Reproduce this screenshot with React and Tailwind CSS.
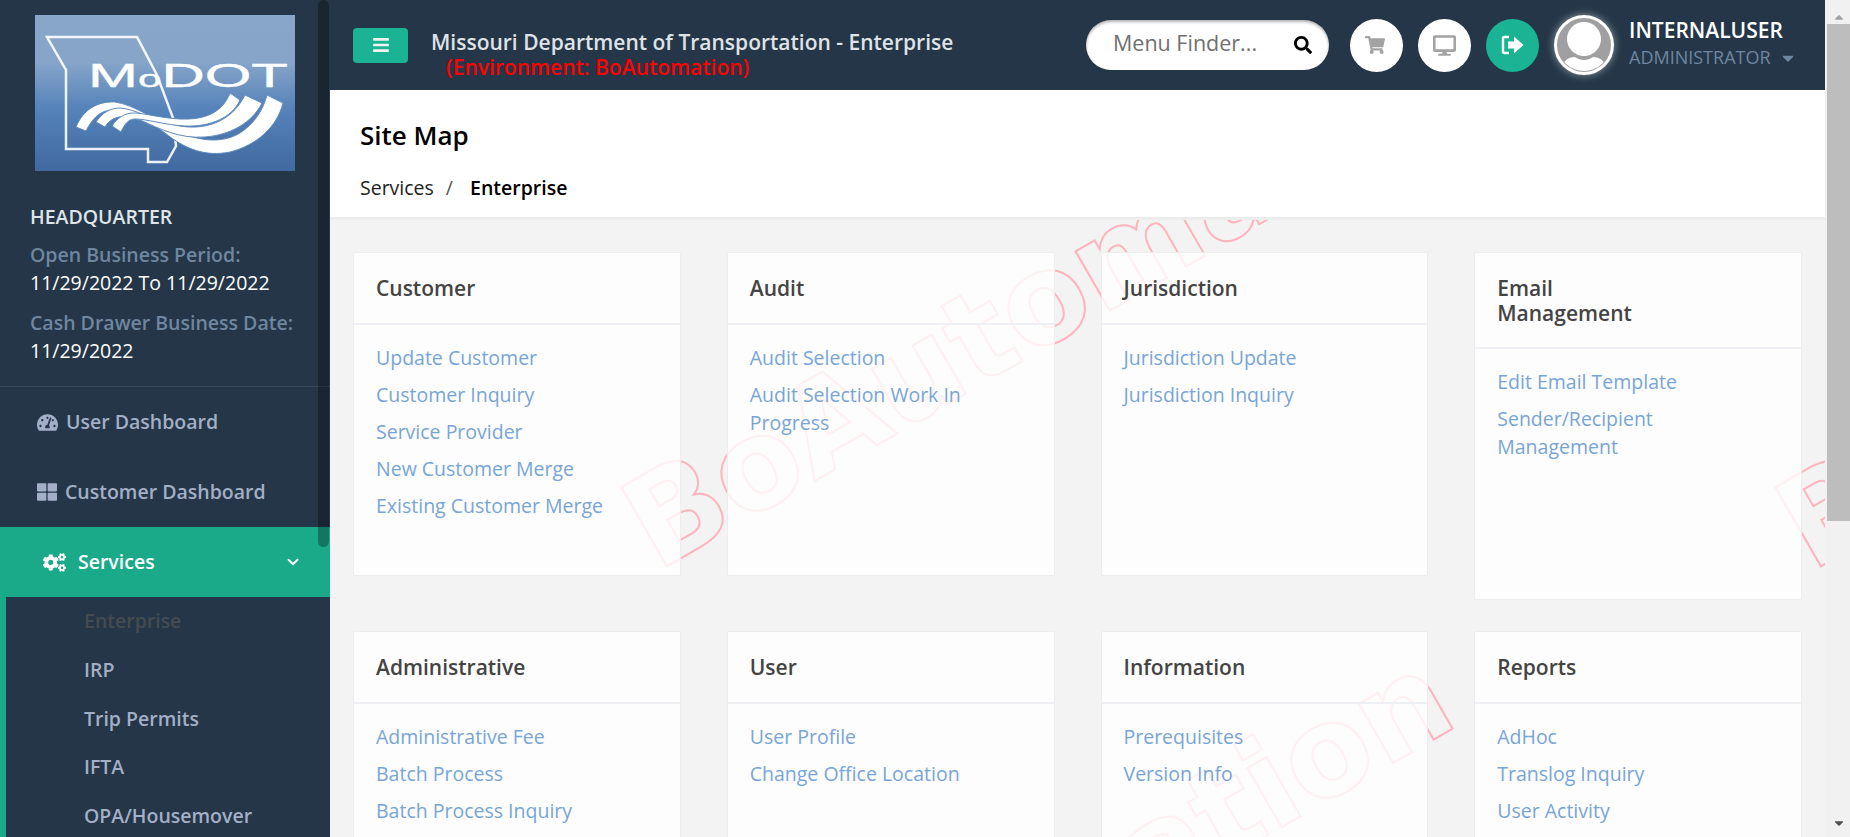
import { FaTachometerAlt, FaThLarge, FaCogs, FaShoppingCart, FaDesktop, FaSearch, FaBars, FaCaretDown, FaCaretUp } from 'react-icons/fa'
import { ChevronDown } from 'lucide-react'

const sections = [
    { title: 'Customer', links: ['Update Customer', 'Customer Inquiry', 'Service Provider', 'New Customer Merge', 'Existing Customer Merge'] },
    { title: 'Audit', links: ['Audit Selection', 'Audit Selection Work In Progress'] },
    { title: 'Jurisdiction', links: ['Jurisdiction Update', 'Jurisdiction Inquiry'] },
    { title: 'Email Management', links: ['Edit Email Template', 'Sender/Recipient Management'], narrow: true },
    { title: 'Administrative', links: ['Administrative Fee', 'Batch Process', 'Batch Process Inquiry'] },
    { title: 'User', links: ['User Profile', 'Change Office Location'] },
    { title: 'Information', links: ['Prerequisites', 'Version Info'] },
    { title: 'Reports', links: ['AdHoc', 'Translog Inquiry', 'User Activity'] },
]

const subMenu = ['Enterprise', 'IRP', 'Trip Permits', 'IFTA', 'OPA/Housemover']

function Logo() {
    return (
        <svg viewBox="0 0 260 156" className="block w-[260px] h-[156px]">
            <defs>
                <linearGradient id="logoBg" x1="0" y1="0" x2="0" y2="1">
                    <stop offset="0" stopColor="#88a6c8" />
                    <stop offset="0.3" stopColor="#86a5c9" />
                    <stop offset="0.6" stopColor="#5583ba" />
                    <stop offset="1" stopColor="#40699f" />
                </linearGradient>
            </defs>
            <rect width="260" height="156" fill="url(#logoBg)" />
            <path d="M12 22 L102 22 L122 60 L138 103 L141 131 L132 147 L113 147 L113 134 L31 134 L31 55 Z" fill="none" stroke="#fff" strokeWidth="2.5" opacity="0.9" />
            <text x="53" y="72" fontFamily="Liberation Sans, sans-serif" fontSize="34" fill="#fff" stroke="#fff" strokeWidth="0.4" textLength="200" lengthAdjust="spacingAndGlyphs">
                M<tspan fontSize="24">o</tspan>DOT
            </text>
            <g fill="#fff" stroke="#5f8cc0" strokeWidth="1">
                <path d="M41 112 C48 95 62 86 80 87 C100 90 118 104 140 115 C160 125 185 130 205 118 C220 108 228 95 232 80 L248 88 C242 112 222 130 195 137 C170 142 150 134 130 118 C112 105 95 96 78 95 C65 95 57 104 51 116 Z" />
                <path d="M61 107 C67 98 75 93 85 93 C100 94 118 105 140 110 C165 116 195 110 210 80 L227 88 C217 108 195 120 170 122 C145 124 125 114 105 105 C92 100 78 99 70 112 Z" />
                <path d="M77 111 C82 103 90 98 98 98 C110 98 125 103 145 104 C170 105 187 98 195 78 L205 85 C197 103 175 112 150 111 C130 110 112 104 100 104 C94 104 90 108 86 117 Z" />
            </g>
        </svg>
    )
}

function Sidebar() {
    return (
        <aside className="relative w-[330px] shrink-0 h-full overflow-hidden bg-[#243647]">
            <div className="pt-[15px] pl-[35px]">
                <Logo />
            </div>
            <div className="pl-[30px] pt-[32px] pb-[21px] border-b border-white/10 text-[19.5px] leading-[28px]">
                <div className="font-semibold text-[#dfe4e8]">HEADQUARTER</div>
                <div className="mt-[10px] font-semibold text-[#6f86a0]">Open Business Period:</div>
                <div className="text-white">11/29/2022 To 11/29/2022</div>
                <div className="mt-[12px] font-semibold text-[#6f86a0]">Cash Drawer Business Date:</div>
                <div className="text-white">11/29/2022</div>
            </div>
            <nav className="text-[19.5px] font-semibold text-[#a3afc6]">
                <a className="flex items-center h-[70px] pl-[37px] gap-[8px]">
                    <FaTachometerAlt className="w-[21px] h-[21px]" />
                    <span>User Dashboard</span>
                </a>
                <a className="flex items-center h-[70px] pl-[37px] gap-[8px]">
                    <FaThLarge className="w-[20px] h-[20px]" />
                    <span>Customer Dashboard</span>
                </a>
                <a className="flex items-center h-[70px] pl-[43px] gap-[12px] bg-[#1aaa8a] text-white">
                    <FaCogs className="w-[23px] h-[23px]" />
                    <span>Services</span>
                    <ChevronDown className="ml-auto mr-[28px] w-[18px] h-[18px]" strokeWidth={2.5} />
                </a>
                <ul className="border-l-[6px] border-[#1aaa8a]">
                    {subMenu.map((item, i) => (
                        <li key={item} className={`h-[48.8px] leading-[48px] pl-[78px] ${i === 0 ? 'text-[#454b51]' : ''}`}>
                            {item}
                        </li>
                    ))}
                </ul>
            </nav>
            <div className="absolute top-0 right-[1px] w-[11px] h-[547px] rounded-full bg-black/30" />
        </aside>
    )
}

function Avatar() {
    return (
        <div className="w-[60px] h-[60px] rounded-full shadow-[0_0_8px_rgba(255,255,255,0.5)]">
            <svg viewBox="0 0 60 60" className="w-full h-full">
                <defs>
                    <clipPath id="avatarClip"><circle cx="30" cy="30" r="26" /></clipPath>
                </defs>
                <circle cx="30" cy="30" r="28.5" fill="#a0a0a0" stroke="#fff" strokeWidth="3" />
                <g clipPath="url(#avatarClip)">
                    <circle cx="30" cy="24" r="17" fill="#fff" />
                    <path d="M6 58 C8 46 14 42 21 42 C26 46 34 46 39 42 C46 42 52 46 54 58 Z" fill="#fff" />
                </g>
            </svg>
        </div>
    )
}

function Header() {
    return (
        <header className="flex items-center h-[90px] shrink-0 pl-[23px] bg-[#243647]">
            <button className="flex items-center justify-center w-[55px] h-[35px] rounded-[4px] bg-[#1ab394] text-[#f2f2f2]">
                <FaBars className="w-[18px] h-[18px]" />
            </button>
            <div className="ml-[23px] pt-[19px] text-[21px] font-semibold leading-[25px]">
                <div className="text-[#dfe3e7]">Missouri Department of Transportation - Enterprise</div>
                <div className="pl-[15px] text-[#ff0000]">(Environment: BoAutomation)</div>
            </div>
            <div className="ml-auto flex items-center">
                <div className="flex items-center justify-between w-[243px] h-[50px] pl-[27px] pr-[17px] rounded-full bg-white shadow-[inset_0_2px_3px_rgba(0,0,0,0.3)]">
                    <span className="pb-[3px] text-[21.5px] text-[#707070]">Menu Finder...</span>
                    <FaSearch className="w-[18px] h-[18px] text-black" />
                </div>
                <button className="ml-[21px] flex items-center justify-center w-[53px] h-[53px] rounded-full bg-white text-[#a3a3a3]">
                    <FaShoppingCart className="mr-[4px] w-[20px] h-[20px]" />
                </button>
                <button className="ml-[15px] flex items-center justify-center w-[53px] h-[53px] rounded-full bg-white text-[#a3a3a3]">
                    <FaDesktop className="w-[23px] h-[23px]" />
                </button>
                <button className="ml-[15px] flex items-center justify-center w-[53px] h-[53px] rounded-full bg-[#1ab394]">
                    <svg viewBox="0 0 24 20" className="w-[24px] h-[20px]">
                        <path d="M8 2 H3.5 A1.5 1.5 0 0 0 2 3.5 V16.5 A1.5 1.5 0 0 0 3.5 18 H8" fill="none" stroke="#fff" strokeWidth="2.4" />
                        <path d="M7 6.5 H13 V1.5 L22.5 10 L13 18.5 V13.5 H7 Z" fill="#fff" />
                    </svg>
                </button>
                <div className="ml-[15px]">
                    <Avatar />
                </div>
                <div className="ml-[15px] w-[196px] leading-[27px]">
                    <div className="-mt-[2px] text-[21px] font-semibold text-white">INTERNALUSER</div>
                    <div className="flex items-center text-[18px] text-[#6f86a0]">
                        ADMINISTRATOR
                        <FaCaretDown className="ml-[8px] w-[18px] h-[18px]" />
                    </div>
                </div>
            </div>
        </header>
    )
}

function Watermark() {
    return (
        <svg className="absolute top-0 left-0 w-[1495px] h-[747px]" viewBox="330 90 1495 747">
            {[[657, 572], [1811, 572], [591, 1226]].map(([x, y]) => (
                <text key={x} transform={`translate(${x} ${y}) rotate(-30)`} fontFamily="DejaVu Sans, sans-serif" fontWeight="700" fontSize="125" fill="none" stroke="#ffb3bd" strokeWidth="2">
                    BoAutomation
                </text>
            ))}
        </svg>
    )
}

function Card({ section }) {
    return (
        <section className="rounded-[2px] border border-[#ededed] bg-white/80">
            <h3 className={`border-b-2 border-[#eef0f3] pl-[22px] pt-[23px] text-[21px] font-semibold leading-[25px] text-[#444] ${section.narrow ? 'pr-[150px] pb-[21px]' : 'pr-[22px] pb-[22px]'}`}>
                {section.title}
            </h3>
            <ul className="h-[250px] overflow-hidden pl-[22px] pr-[30px] pt-[19px] text-[19.5px] leading-[28px] text-[#78a5d5]">
                {section.links.map((link) => (
                    <li key={link} className="mb-[9px]">{link}</li>
                ))}
            </ul>
        </section>
    )
}

export default function App() {
    return (
        <div className="flex h-screen overflow-hidden bg-[#f3f3f3] font-['Open_Sans',sans-serif]">
            <Sidebar />
            <main className="flex flex-1 min-w-0 flex-col">
                <Header />
                <div className="relative flex-1 overflow-hidden">
                    <Watermark />
                    <div className="relative">
                        <div className="h-[130px] border-b-[3px] border-[#ececec] bg-white pl-[30px] pt-[25px]">
                            <h1 className="text-[26px] font-semibold leading-[40px] text-black">Site Map</h1>
                            <div className="mt-[19px] text-[19.5px] leading-[28px]">
                                <span className="text-[#222]">Services</span>
                                <span className="ml-[12px] mr-[17px] text-[#555]">/</span>
                                <span className="font-semibold text-black">Enterprise</span>
                            </div>
                        </div>
                        <div className="grid grid-cols-4 items-start gap-x-[46px] gap-y-[31px] px-[23px] pt-[32px]">
                            {sections.map((section) => (
                                <Card key={section.title} section={section} />
                            ))}
                        </div>
                    </div>
                </div>
            </main>
            <div className="flex w-[25px] shrink-0 flex-col items-center bg-[#f1f1f1] pl-[2px]">
                <FaCaretUp className="mt-[10px] h-[14px] w-[14px] text-[#a3a3a3]" />
                <div className="h-[497px] w-full bg-[#bdbdbd]" />
                <FaCaretDown className="mt-auto mb-[7px] h-[14px] w-[14px] text-[#505050]" />
            </div>
        </div>
    )
}
